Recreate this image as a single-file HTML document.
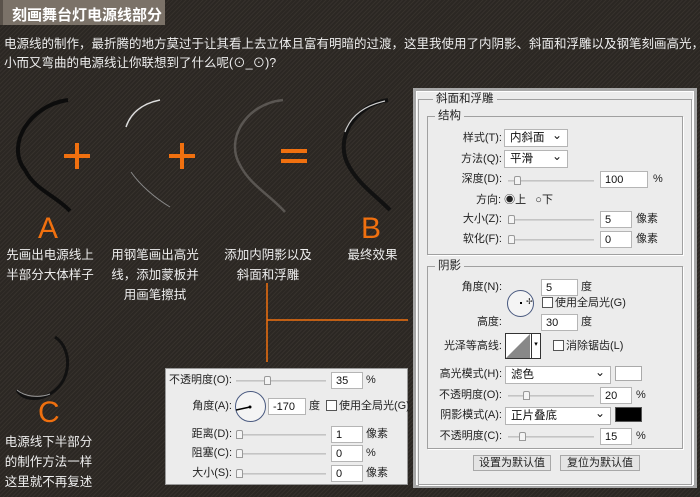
<!DOCTYPE html>
<html><head><meta charset="utf-8"><style>
*{margin:0;padding:0;box-sizing:border-box}
body{width:700px;height:497px;overflow:hidden;position:relative;background:#2f2b27;font-family:"Liberation Sans","Noto Sans CJK SC",sans-serif;color:#e8e4de;font-size:12px}
.bg{position:absolute;inset:0;background:repeating-linear-gradient(135deg,#2b2723 0 2px,#36312c 2px 3px)}
.a{position:absolute;white-space:nowrap}
.t{left:0;top:0;width:165px;height:25px;background:#7b7268;border-left:3px solid #5a524a;font-size:15px;font-weight:bold;color:#fff;padding:4px 0 0 9px}
.p{left:4px;font-size:12.5px;color:#eee}
.o{color:#f0700f;font-size:30px;font-family:"Liberation Sans",sans-serif}
.pl{color:#f0700f;font-size:46px;font-weight:bold;font-family:"Liberation Sans",sans-serif;line-height:46px}
.c{font-size:12.5px;color:#eee;text-align:center;line-height:20px}
.dlg{left:413px;top:88px;width:284px;height:400px;background:#ececec;border:3px solid #a8a8a8;box-shadow:inset 0 0 0 1px #fff}
.box{position:absolute;border:1px solid #a0a0a0;box-shadow:1px 1px 0 #fff}
.lg{position:absolute;background:#ececec;padding:0 3px;font-size:11.5px;line-height:14px;color:#222}
.d{position:absolute;color:#222;font-size:11px;line-height:14px;white-space:nowrap}
.r{text-align:right;left:0}
.in{position:absolute;background:#fff;border:1px solid #b5b5b5;color:#111;font-size:11px;line-height:14px;padding:1px 4px;height:17px}
.sel{position:absolute;background:#fff;border:1px solid #b5b5b5;color:#111;font-size:11.5px;line-height:16px;padding:0 5px;height:18px}
.sel:after{content:"⌄";position:absolute;right:5px;top:-3px;font-size:12px}
.sl{position:absolute;height:2px;background:#d4d4d4;border-top:1px solid #c4c4c4}
.th{position:absolute;width:7px;height:9px;background:#f4f4f4;border:1px solid #999;border-radius:2px 2px 0 0;top:-5px}
.cb{position:absolute;width:11px;height:11px;background:#fff;border:1px solid #555}
.btn{position:absolute;background:#e4e4e4;border:1px solid #a8a8a8;font-size:11px;color:#222;text-align:center;height:16px;line-height:14px}
</style></head><body>
<div class="bg"></div>
<div class="a t">刻画舞台灯电源线部分</div>
<div class="a p" style="top:33px">电源线的制作，最折腾的地方莫过于让其看上去立体且富有明暗的过渡，这里我使用了内阴影、斜面和浮雕以及钢笔刻画高光，小</div>
<div class="a p" style="top:52px">小而又弯曲的电源线让你联想到了什么呢(⊙_⊙)?</div>
<svg class="a" style="left:0;top:0" width="420" height="497">
<path d="M68 100 C30 105 5 145 25 170 C35 190 55 195 70 211" fill="none" stroke="#0c0c0c" stroke-width="4"/>
<path d="M160 100 C140 104 130 115 126 127" fill="none" stroke="#ddd" stroke-width="1.5"/>
<path d="M131 172 C140 185 155 198 170 207" fill="none" stroke="#888" stroke-width="1"/>
<path d="M283 100 C245 104 225 140 240 165 C250 185 270 195 285 212" fill="none" stroke="#5a5652" stroke-width="2.5"/>
<path d="M388 100 C355 105 332 140 350 168 C360 185 375 195 390 210" fill="none" stroke="#111" stroke-width="4"/>
<path d="M385 101 C362 106 350 118 345 132" fill="none" stroke="#ccc" stroke-width="1.2"/>
<path d="M55 337 C75 350 72 390 40 398 C28 400 20 396 17 390" fill="none" stroke="#111" stroke-width="3"/>
<path d="M17 390 C25 397 40 398 50 394" fill="none" stroke="#999" stroke-width="1"/>
<path d="M267 283 V362 M267 320 H408" stroke="#f0700f" stroke-width="1.5"/>
<path d="M64 156 H90 M77 143 V169 M169 156 H195 M182 143 V169" stroke="#f0700f" stroke-width="4"/>
<path d="M281 151 H307 M281 161 H307" stroke="#f0700f" stroke-width="4"/>
</svg>
<div class="a o" style="left:38px;top:212px">A</div>
<div class="a o" style="left:361px;top:212px">B</div>
<div class="a o" style="left:38px;top:396px">C</div>
<div class="a c" style="left:0;top:245px;width:100px">先画出电源线上<br>半部分大体样子</div>
<div class="a c" style="left:105px;top:245px;width:100px">用钢笔画出高光<br>线，添加蒙板并<br>用画笔擦拭</div>
<div class="a c" style="left:218px;top:245px;width:100px">添加内阴影以及<br>斜面和浮雕</div>
<div class="a c" style="left:330px;top:245px;width:85px">最终效果</div>
<div class="a c" style="left:0;top:432px;width:97px">电源线下半部分<br>的制作方法一样<br>这里就不再复述</div>

<div class="a dlg">
<div class="box" style="left:2px;top:8px;width:274px;height:386px"></div>
<div class="lg" style="left:17px;top:1px">斜面和浮雕</div>
<div class="box" style="left:11px;top:25px;width:256px;height:139px"></div>
<div class="lg" style="left:19px;top:18px">结构</div>
<div class="d r" style="width:86px;top:40px">样式(T):</div><div class="sel" style="left:88px;top:38px;width:64px">内斜面</div>
<div class="d r" style="width:86px;top:61px">方法(Q):</div><div class="sel" style="left:88px;top:59px;width:64px">平滑</div>
<div class="d r" style="width:86px;top:81px">深度(D):</div><div class="sl" style="left:92px;top:89px;width:86px"><div class="th" style="left:6px"></div></div><div class="in" style="left:184px;top:80px;width:48px">100</div><div class="d" style="left:237px;top:81px">%</div>
<div class="d" style="left:60px;top:102px">方向: <span>◉</span>上 &nbsp;&nbsp;<span>○</span>下</div>
<div class="d r" style="width:86px;top:121px">大小(Z):</div><div class="sl" style="left:92px;top:128px;width:86px"><div class="th" style="left:0"></div></div><div class="in" style="left:184px;top:120px;width:32px">5</div><div class="d" style="left:220px;top:121px">像素</div>
<div class="d r" style="width:86px;top:141px">软化(F):</div><div class="sl" style="left:92px;top:148px;width:86px"><div class="th" style="left:0"></div></div><div class="in" style="left:184px;top:140px;width:32px">0</div><div class="d" style="left:220px;top:141px">像素</div>
<div class="box" style="left:11px;top:175px;width:256px;height:183px"></div>
<div class="lg" style="left:19px;top:168px">阴影</div>
<div class="d r" style="width:86px;top:189px">角度(N):</div><div class="in" style="left:125px;top:188px;width:37px">5</div><div class="d" style="left:165px;top:189px">度</div>
<div style="position:absolute;left:91px;top:199px;width:27px;height:27px;border:1.5px solid #4a5a80;border-radius:50%;background:#f4f4f4"><div style="position:absolute;left:12px;top:11px;width:2px;height:2px;background:#000"></div><div style="position:absolute;left:18px;top:6px;font-size:8px;color:#222">✢</div></div>
<div class="cb" style="left:126px;top:206px"></div><div class="d" style="left:139px;top:205px">使用全局光(G)</div>
<div class="d r" style="width:86px;top:224px">高度:</div><div class="in" style="left:125px;top:223px;width:37px">30</div><div class="d" style="left:165px;top:224px">度</div>
<div class="d r" style="width:86px;top:248px">光泽等高线:</div>
<div style="position:absolute;left:89px;top:242px;width:36px;height:26px;background:#fff;border:1px solid #333"><svg width="26" height="24" style="position:absolute;left:0;top:0"><polygon points="0,24 24,0 24,24" fill="#888"/></svg><div style="position:absolute;right:0;top:0;width:9px;height:24px;border-left:1px solid #333;font-size:7px;color:#000;text-align:center;line-height:22px">▾</div></div>
<div class="cb" style="left:137px;top:249px"></div><div class="d" style="left:150px;top:248px">消除锯齿(L)</div>
<div class="d r" style="width:86px;top:276px">高光模式(H):</div><div class="sel" style="left:89px;top:275px;width:106px">滤色</div><div style="position:absolute;left:199px;top:275px;width:27px;height:15px;background:#fff;border:1px solid #aaa"></div>
<div class="d r" style="width:86px;top:297px">不透明度(O):</div><div class="sl" style="left:92px;top:304px;width:86px"><div class="th" style="left:15px"></div></div><div class="in" style="left:184px;top:296px;width:32px">20</div><div class="d" style="left:220px;top:297px">%</div>
<div class="d r" style="width:86px;top:317px">阴影模式(A):</div><div class="sel" style="left:89px;top:316px;width:106px">正片叠底</div><div style="position:absolute;left:199px;top:316px;width:27px;height:15px;background:#000;border:1px solid #555"></div>
<div class="d r" style="width:86px;top:338px">不透明度(C):</div><div class="sl" style="left:92px;top:345px;width:86px"><div class="th" style="left:11px"></div></div><div class="in" style="left:184px;top:337px;width:32px">15</div><div class="d" style="left:220px;top:338px">%</div>
<div class="btn" style="left:57px;top:364px;width:78px">设置为默认值</div>
<div class="btn" style="left:144px;top:364px;width:80px">复位为默认值</div>
</div>

<div class="a" style="left:165px;top:368px;width:243px;height:117px;background:#ececec;border:1px solid #999">
<div class="d r" style="width:66px;top:4px">不透明度(O):</div><div class="sl" style="left:70px;top:11px;width:90px"><div class="th" style="left:28px"></div></div><div class="in" style="left:165px;top:3px;width:32px">35</div><div class="d" style="left:200px;top:4px">%</div>
<div class="d r" style="width:66px;top:30px">角度(A):</div>
<div style="position:absolute;left:69px;top:22px;width:31px;height:31px;border:1.5px solid #4a5a80;border-radius:50%;background:#f4f4f4"><svg width="30" height="30" style="position:absolute;left:0;top:0"><line x1="0" y1="18" x2="14" y2="15" stroke="#000" stroke-width="1.5"/><circle cx="14" cy="15" r="1.5"/></svg></div>
<div class="in" style="left:102px;top:29px;width:38px">-170</div><div class="d" style="left:143px;top:30px">度</div>
<div class="cb" style="left:160px;top:31px"></div><div class="d" style="left:173px;top:30px">使用全局光(G)</div>
<div class="d r" style="width:66px;top:58px">距离(D):</div><div class="sl" style="left:70px;top:65px;width:90px"><div class="th" style="left:0"></div></div><div class="in" style="left:165px;top:57px;width:32px">1</div><div class="d" style="left:200px;top:58px">像素</div>
<div class="d r" style="width:66px;top:77px">阻塞(C):</div><div class="sl" style="left:70px;top:84px;width:90px"><div class="th" style="left:0"></div></div><div class="in" style="left:165px;top:76px;width:32px">0</div><div class="d" style="left:200px;top:77px">%</div>
<div class="d r" style="width:66px;top:97px">大小(S):</div><div class="sl" style="left:70px;top:104px;width:90px"><div class="th" style="left:0"></div></div><div class="in" style="left:165px;top:96px;width:32px">0</div><div class="d" style="left:200px;top:97px">像素</div>
</div>
</body></html>
